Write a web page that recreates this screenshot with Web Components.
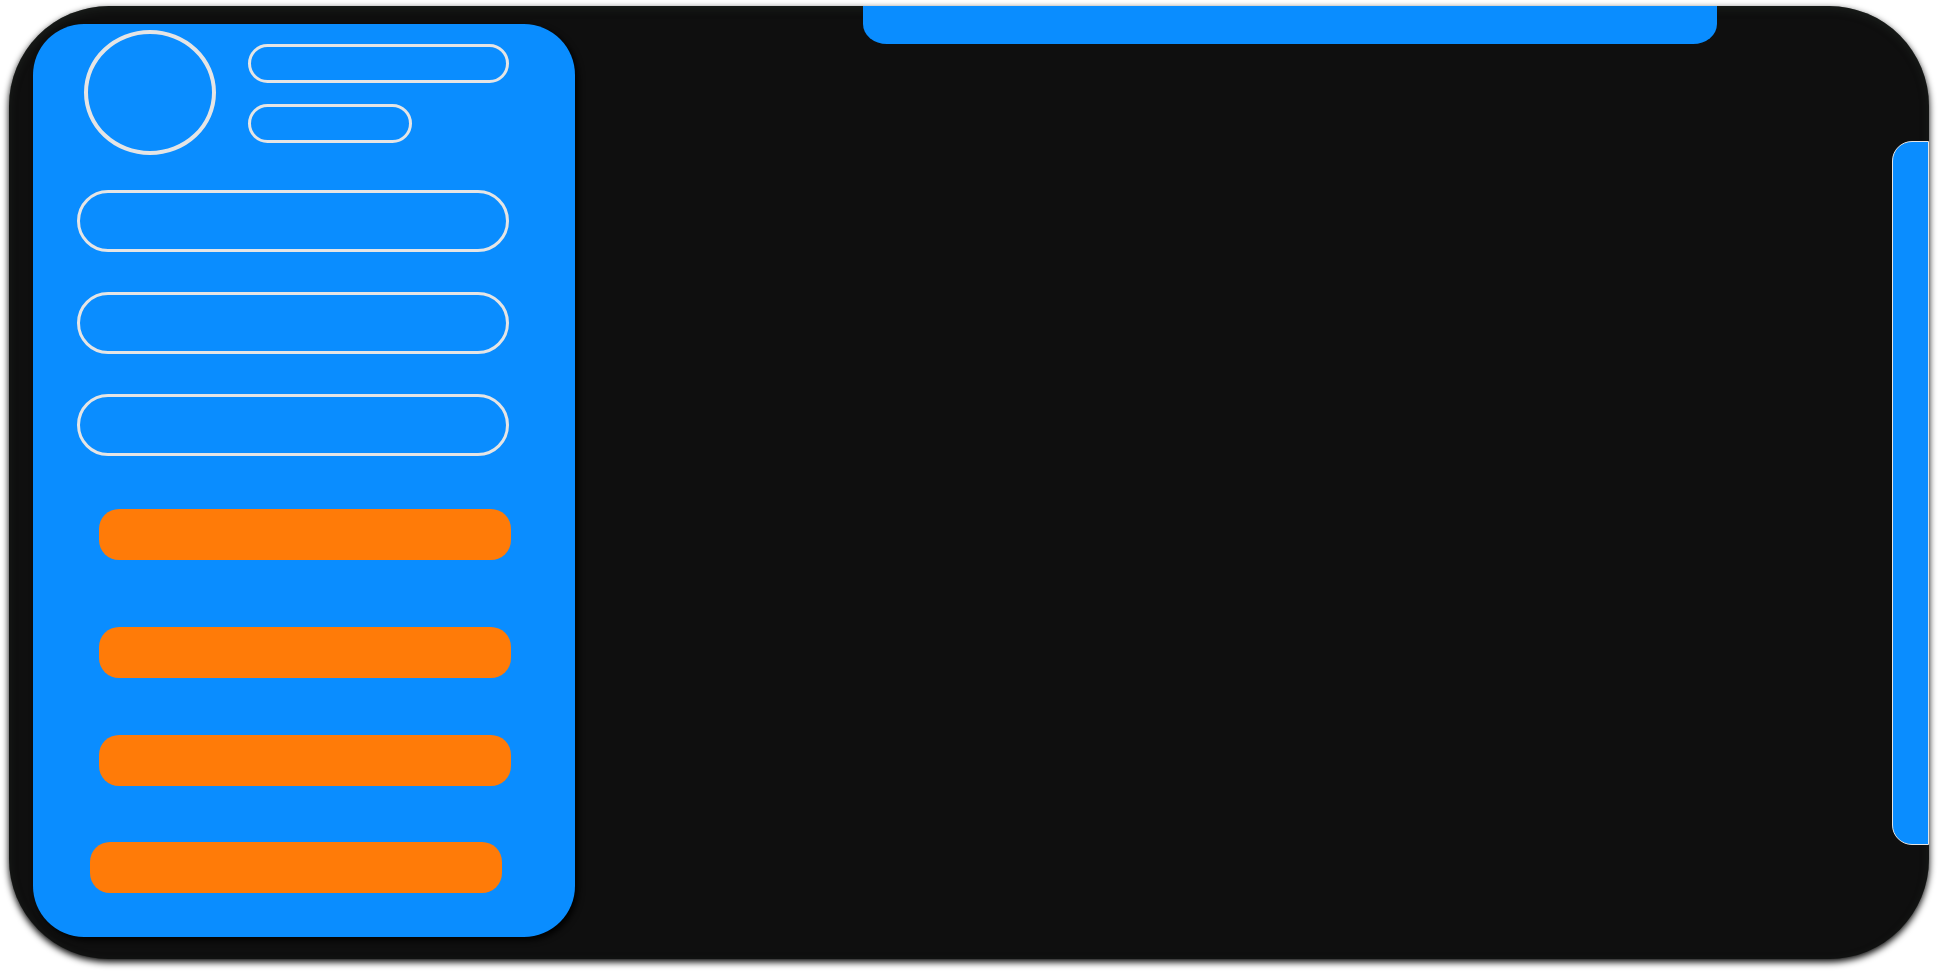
<!DOCTYPE html>
<html lang="en">
<head>
<meta charset="utf-8">
<meta name="viewport" content="width=device-width, initial-scale=1">
<title>Dashboard</title>
<style>
  body {
    box-sizing: border-box;
    min-height: 100vh;
    margin: 0;
    padding: 6px 9px 13px;
    background: #fff;
    font-family: "Liberation Sans", sans-serif;
  }
</style>
</head>
<body>
<app-frame>
  <side-panel slot="side">
    <profile-card slot="profile"></profile-card>
    <pill-field slot="fields" label="First field"></pill-field>
    <pill-field slot="fields" label="Second field"></pill-field>
    <pill-field slot="fields" label="Third field"></pill-field>
    <action-button slot="primary" label="Primary action"></action-button>
    <action-button slot="actions" label="Second action"></action-button>
    <action-button slot="actions" label="Third action"></action-button>
    <action-button slot="footer" label="Last action"></action-button>
  </side-panel>
  <main-stage slot="main">
    <edge-tab slot="top" edge="top"></edge-tab>
    <edge-tab slot="right" edge="right"></edge-tab>
  </main-stage>
</app-frame>

<script>
const define = (name, html, setup) => {
  const template = document.createElement('template');
  template.innerHTML = html;
  customElements.define(name, class extends HTMLElement {
    constructor() {
      super();
      this.attachShadow({ mode: 'open' }).append(template.content.cloneNode(true));
    }
    connectedCallback() { if (setup) setup(this); }
  });
};

const applyLabel = selector => host =>
  host.shadowRoot.querySelector(selector).setAttribute('aria-label', host.getAttribute('label'));

define('app-frame', `
  <style>
    :host {
      display: grid;
      grid-template-columns: minmax(0, 2fr) minmax(0, 5fr);
      box-sizing: border-box;
      min-height: calc(100vh - 19px);
      padding-left: 24px;
      border-radius: 100px;
      background: #0f0f0f;
      box-shadow: 0 3px 7px #000, inset 0 3px 8px rgba(45, 55, 48, .4);
    }
  </style>
  <slot name="side"></slot>
  <slot name="main"></slot>`);

define('side-panel', `
  <style>
    :host {
      display: flex;
      flex-direction: column;
      box-sizing: border-box;
      margin: 18px 0 22px;
      padding: 6px 66px 43px 44px;
      border-radius: 51px;
      background: #0a8dff;
      box-shadow: 3px 3px 6px #000;
    }
    .fields { display: grid; gap: 40px; margin-top: 35px; }
    .primary { margin: 53px -2px 0 22px; }
    .actions { display: grid; gap: 57px; margin: 67px -2px 0 22px; }
    .footer { margin: 56px 7px 0 13px; }
  </style>
  <slot name="profile"></slot>
  <div class="fields"><slot name="fields"></slot></div>
  <div class="primary"><slot name="primary"></slot></div>
  <div class="actions"><slot name="actions"></slot></div>
  <div class="footer"><slot name="footer"></slot></div>`);

define('profile-card', `
  <style>
    :host { display: flex; gap: 32px; padding-left: 7px; }
    div { box-sizing: border-box; border: 3px solid #e5e5e5; }
    .avatar { flex: none; width: 132px; height: 125px; border-width: 4px; border-radius: 50%; }
    .lines { flex: 1; display: grid; align-content: start; gap: 21px; padding-top: 14px; border: 0; }
    .line { height: 39px; border-radius: 20px; }
    .short { width: 63%; }
  </style>
  <div class="avatar"></div>
  <div class="lines">
    <div class="line"></div>
    <div class="line short"></div>
  </div>`);

define('pill-field', `
  <style>
    :host { display: block; }
    input {
      display: block;
      box-sizing: border-box;
      width: 100%;
      height: 62px;
      margin: 0;
      padding: 0 28px;
      border: 3px solid #e5e5e5;
      border-radius: 31px;
      background: transparent;
      color: #fff;
      font: inherit;
    }
  </style>
  <input type="text">`, applyLabel('input'));

define('action-button', `
  <style>
    :host { display: block; }
    button {
      display: block;
      width: 100%;
      height: 51px;
      padding: 0;
      border: 0;
      border-radius: 20px;
      background: #ff7b08;
      color: #fff;
      font: inherit;
    }
  </style>
  <button type="button"></button>`, applyLabel('button'));

define('main-stage', `
  <style>
    :host {
      display: grid;
      grid-template-columns: 288px minmax(0, 1fr) 175px 37px;
      grid-template-rows: 38px 97px minmax(0, 1fr) 114px;
    }
    ::slotted([slot="top"]) { grid-area: 1 / 2; }
    ::slotted([slot="right"]) { grid-area: 3 / 4; }
  </style>
  <slot name="top"></slot>
  <slot name="right"></slot>`);

define('edge-tab', `
  <style>
    :host { display: block; box-sizing: border-box; background: #0a8dff; }
    :host([edge="top"]) { border-radius: 0 0 24px 24px / 0 0 20px 20px; }
    :host([edge="right"]) { border: 1px solid #e5e5e5; border-radius: 20px 0 0 20px; }
  </style>`);
</script>
</body>
</html>
